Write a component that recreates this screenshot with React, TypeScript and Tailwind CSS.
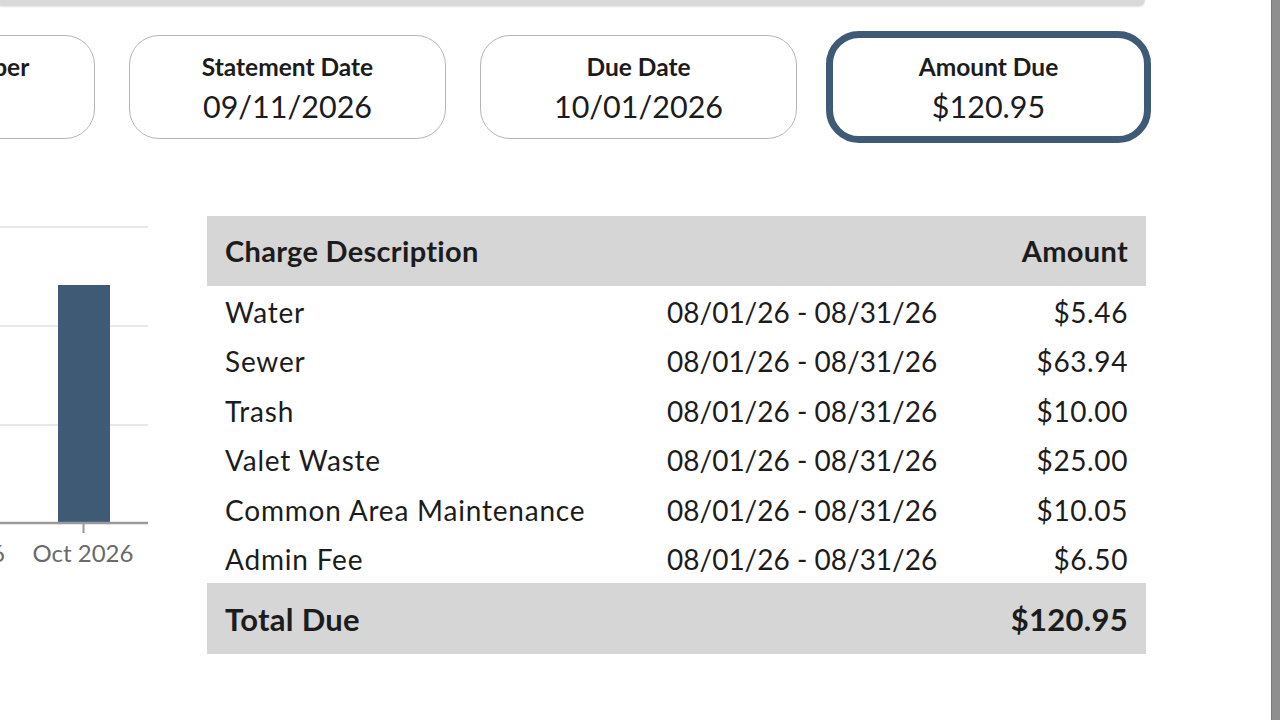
import React from "react";

const charges = [
  { name: "Water", period: "08/01/26 - 08/31/26", amount: "$5.46" },
  { name: "Sewer", period: "08/01/26 - 08/31/26", amount: "$63.94" },
  { name: "Trash", period: "08/01/26 - 08/31/26", amount: "$10.00" },
  { name: "Valet Waste", period: "08/01/26 - 08/31/26", amount: "$25.00" },
  { name: "Common Area Maintenance", period: "08/01/26 - 08/31/26", amount: "$10.05" },
  { name: "Admin Fee", period: "08/01/26 - 08/31/26", amount: "$6.50" },
];

function InfoBox({ label, value }: { label: string; value: string }) {
  return (
    <div className="w-[317px] h-[104px] shrink-0 rounded-[30px] border border-[#b5b5b5] flex flex-col items-center justify-center">
      <div className="text-[24.5px] font-bold text-[#1c1c1c] leading-none mt-[2px]">{label}</div>
      <div className="text-[30.5px] text-[#1c1c1c] leading-none mt-[12px] h-[30px]">{value}</div>
    </div>
  );
}

function UsageChart() {
  return (
    <svg width="207" height="360" viewBox="0 0 207 360" className="shrink-0">
      {/* grid */}
      <line x1="0" y1="11" x2="148" y2="11" stroke="#e0e0e0" strokeWidth="1.5" />
      <line x1="0" y1="110" x2="148" y2="110" stroke="#e0e0e0" strokeWidth="1.5" />
      <line x1="0" y1="209" x2="148" y2="209" stroke="#e0e0e0" strokeWidth="1.5" />
      {/* bar */}
      <rect x="58" y="69" width="52" height="238" fill="#3e5a75" />
      {/* axis */}
      <line x1="0" y1="307" x2="148" y2="307" stroke="#9a9a9a" strokeWidth="2.5" />
      <line x1="83.5" y1="307" x2="83.5" y2="317" stroke="#9a9a9a" strokeWidth="2" />
      <text x="5" y="346" textAnchor="end" fontFamily="Lato, sans-serif" fontSize="24" fill="#6a6a6a">
        Sep 2026
      </text>
      <text x="83" y="346" textAnchor="middle" fontFamily="Lato, sans-serif" fontSize="24" fill="#6a6a6a">
        Oct 2026
      </text>
    </svg>
  );
}

export default function App() {
  return (
    <div
      className="w-[1280px] h-[720px] overflow-hidden bg-white flex"
      style={{ fontFamily: "Lato, 'Open Sans', sans-serif" }}
    >
      <div className="flex-1 flex flex-col">
        {/* top bar */}
        <div className="w-[1145px] h-[6px] bg-[#d9d9d9] rounded-br-[6px] shadow-[0_1px_2px_rgba(0,0,0,0.12)]" />

        {/* summary boxes */}
        <div className="flex items-center ml-[-222px] mt-[25px]">
          <InfoBox label="Account Number" value="" />
          <div className="ml-[34px]">
            <InfoBox label="Statement Date" value="09/11/2026" />
          </div>
          <div className="ml-[34px]">
            <InfoBox label="Due Date" value="10/01/2026" />
          </div>
          <div className="ml-[29px] w-[325px] h-[112px] shrink-0 rounded-[33px] border-[7px] border-[#3e5a75] flex flex-col items-center justify-center">
            <div className="text-[24.5px] font-bold text-[#1c1c1c] leading-none mt-[2px]">Amount Due</div>
            <div className="text-[30.5px] text-[#1c1c1c] leading-none mt-[12px] h-[30px]">$120.95</div>
          </div>
        </div>

        {/* chart + charges */}
        <div className="flex mt-[73px]">
          <UsageChart />
          <div className="w-[939px] text-[#1c1c1c]">
            <div className="h-[70px] bg-[#d6d6d6] flex items-center justify-between px-[18px] text-[29px] tracking-[0.3px] font-bold">
              <span>Charge Description</span>
              <span>Amount</span>
            </div>
            {charges.map((c) => (
              <div
                key={c.name}
                className="h-[49.5px] grid grid-cols-[442px_1fr_auto] items-center px-[18px] text-[28px] pt-[2px]"
              >
                <span className="tracking-[0.8px]">{c.name}</span>
                <span>{c.period}</span>
                <span className="text-right tracking-[0.6px]">{c.amount}</span>
              </div>
            ))}
            <div className="h-[71px] bg-[#d6d6d6] flex items-center justify-between px-[18px] text-[31px] tracking-[0.3px] font-bold pt-[2px]">
              <span>Total Due</span>
              <span>$120.95</span>
            </div>
          </div>
        </div>
      </div>

      {/* right edge strip */}
      <div className="w-[9px] h-full bg-[#8f8f8f] border-l border-[#7d7d7d]" />
    </div>
  );
}
